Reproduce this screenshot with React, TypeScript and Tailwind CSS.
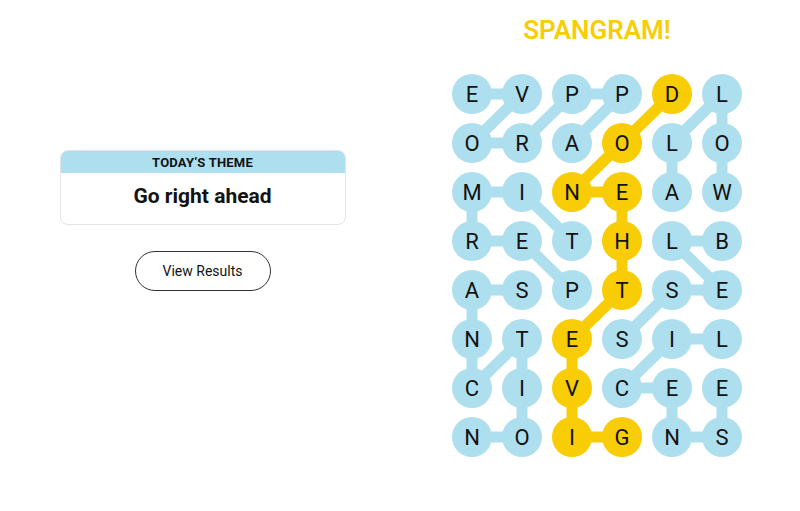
const letters = [
  'EVPPDL',
  'ORAOLO',
  'MINEAW',
  'RETHLB',
  'ASPTSE',
  'NTESIL',
  'CIVCEE',
  'NOIGNS',
]

// [row, col] pairs
type Cell = [number, number]
const blueLinks: [Cell, Cell][] = [
  [[0, 0], [0, 1]],
  [[0, 1], [1, 0]],
  [[1, 0], [1, 1]],
  [[1, 1], [0, 2]],
  [[0, 2], [0, 3]],
  [[0, 3], [1, 2]],
  [[0, 5], [1, 4]],
  [[0, 5], [1, 5]],
  [[1, 5], [2, 5]],
  [[1, 4], [2, 4]],
  [[2, 0], [2, 1]],
  [[2, 0], [3, 0]],
  [[3, 0], [3, 1]],
  [[2, 1], [3, 2]],
  [[3, 1], [4, 2]],
  [[3, 4], [3, 5]],
  [[3, 4], [4, 5]],
  [[4, 4], [4, 5]],
  [[4, 4], [5, 3]],
  [[4, 0], [4, 1]],
  [[4, 0], [5, 0]],
  [[5, 0], [6, 0]],
  [[6, 0], [5, 1]],
  [[5, 1], [6, 1]],
  [[6, 1], [7, 1]],
  [[7, 0], [7, 1]],
  [[5, 4], [5, 5]],
  [[5, 4], [6, 3]],
  [[6, 3], [6, 4]],
  [[6, 4], [7, 4]],
  [[7, 4], [7, 5]],
  [[6, 5], [7, 5]],
]

const spangram: Cell[] = [
  [0, 4], [1, 3], [2, 2], [2, 3], [3, 3], [4, 3], [5, 2], [6, 2], [7, 2], [7, 3],
]

const BLUE = '#aedfee'
const YELLOW = '#f8cd05'
const cx = (c: number) => 25 + c * 50
const cy = (r: number) => 20 + r * 49

const isGold = (r: number, c: number) => spangram.some(([a, b]) => a === r && b === c)

const Board = () => (
  <svg width={300} height={384} viewBox="0 0 300 384">
    {blueLinks.map(([a, b], i) => (
      <line key={i} x1={cx(a[1])} y1={cy(a[0])} x2={cx(b[1])} y2={cy(b[0])} stroke={BLUE} strokeWidth={11} />
    ))}
    {spangram.slice(1).map((b, i) => {
      const a = spangram[i]
      return <line key={`s${i}`} x1={cx(a[1])} y1={cy(a[0])} x2={cx(b[1])} y2={cy(b[0])} stroke={YELLOW} strokeWidth={11} />
    })}
    {letters.map((row, r) =>
      row.split('').map((ch, c) => (
        <g key={`${r}-${c}`}>
          <circle cx={cx(c)} cy={cy(r)} r={20} fill={isGold(r, c) ? YELLOW : BLUE} />
          <text
            x={cx(c)}
            y={cy(r) + 7.5}
            textAnchor="middle"
            fontFamily="Roboto, 'Liberation Sans', sans-serif"
            fontSize={22}
            fill="#121212"
          >
            {ch}
          </text>
        </g>
      )),
    )}
  </svg>
)

export default function App() {
  return (
    <div className="w-[800px] h-[511px] bg-white flex font-['Roboto','Liberation_Sans',sans-serif] text-[#121212]">
      <div className="w-[405px] pt-[150px] flex flex-col items-center">
        <div className="w-[286px] rounded-lg border border-[#e3e3e3] overflow-hidden">
          <div className="h-[22px] bg-[#aedfee] flex items-center justify-center text-[13px] font-bold tracking-[0.2px] leading-none">
            TODAY’S THEME
          </div>
          <div className="h-[51px] flex items-center justify-center text-[21px] font-bold pb-[3px]">
            Go right ahead
          </div>
        </div>
        <button className="mt-[26px] w-[136px] h-[40px] rounded-full border border-[#333] text-[14px] text-[#121212] flex items-center justify-center">
          View Results
        </button>
      </div>
      <div className="pl-[42px] flex flex-col items-center w-[300px] box-content">
        <div className="mt-[13px] h-[34px] flex items-center text-[26px] font-semibold text-[#f8cd05] leading-none">
          SPANGRAM!
        </div>
        <div className="mt-[27px]">
          <Board />
        </div>
      </div>
    </div>
  )
}
